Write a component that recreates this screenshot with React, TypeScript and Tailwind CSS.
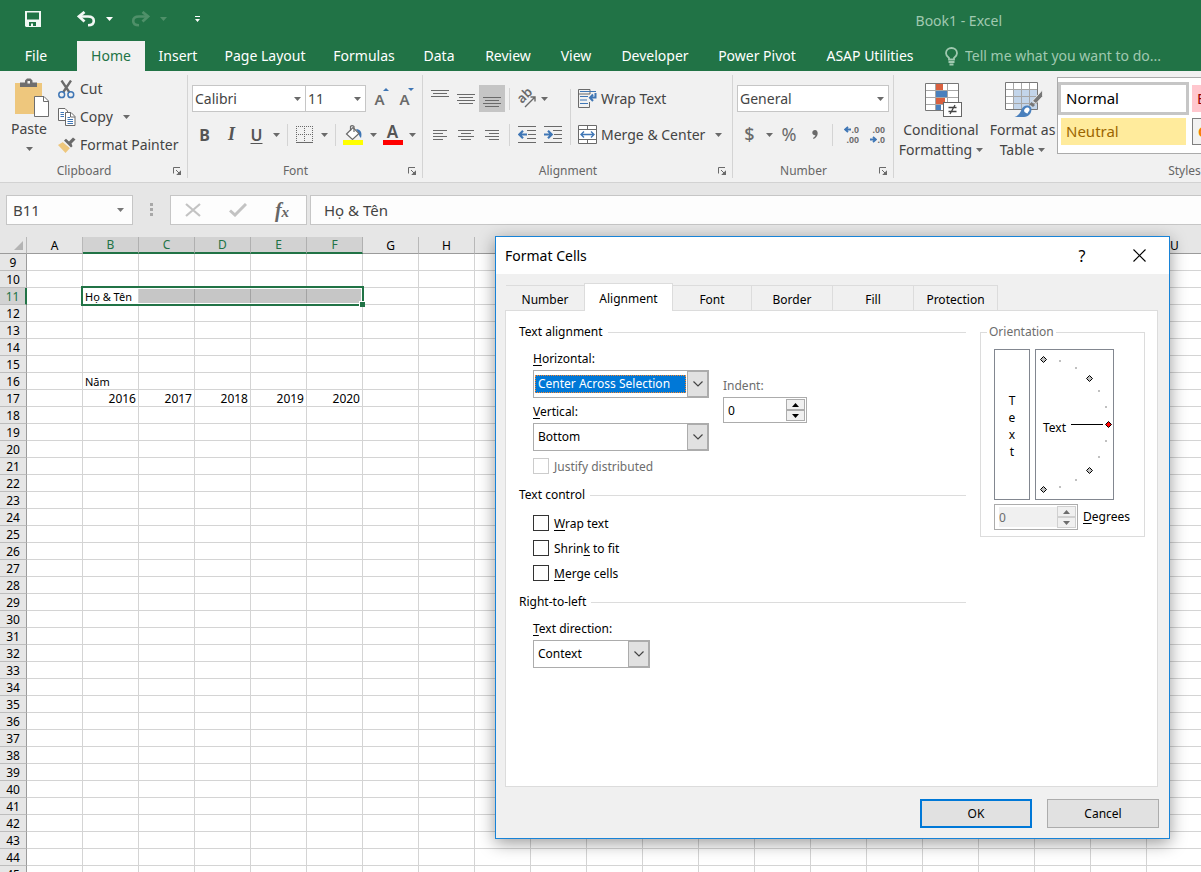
import React from "react";

const GRAY = "#6a6a6a";
const BLUE = "#3f76b5";

function Caret({ className = "" }: { className?: string }) {
  return (
    <svg width="7" height="4" viewBox="0 0 7 4" className={`shrink-0 ${className}`} aria-hidden="true">
      <path d="M0 0H7L3.5 4Z" fill="currentColor" />
    </svg>
  );
}

function Launcher() {
  return (
    <svg width="8" height="8" viewBox="0 0 8 8" fill="none" aria-hidden="true">
      <path d="M.5 6.5V.5H7" stroke={GRAY} />
      <path d="M3 3L6 6" stroke={GRAY} />
      <path d="M8 3.2V8H3.2Z" fill={GRAY} />
    </svg>
  );
}

type Line = [number, number];
function Lines({ rows, w, gap = 4, className = "" }: { rows: Line[]; w: number; gap?: number; className?: string }) {
  return (
    <svg width={w} height={(rows.length - 1) * gap + 1} className={className} aria-hidden="true">
      {rows.map(([a, b], i) => (
        <rect key={i} x={a} y={i * gap} width={b - a} height="1" fill={GRAY} />
      ))}
    </svg>
  );
}

function SaveIcon() {
  return (
    <svg width="16" height="16" viewBox="0 0 16 16" aria-hidden="true">
      <path fillRule="evenodd" fill="#f3f8f5" d="M0 0H16V16H1L0 15ZM2 1.500V8.500H14V1.500ZM4 11V15H6V12.500H8V15H11V11Z" />
    </svg>
  );
}

function UndoIcon({ flip = false }: { flip?: boolean }) {
  return (
    <svg width="19" height="16" viewBox="0 0 19 16" fill="none" stroke={flip ? "#4f9069" : "#f3f8f5"} aria-hidden="true">
      <g transform={flip ? "translate(19 0) scale(-1 1)" : undefined}>
        <path d="M7.500 1L2 5.500L7.500 10.500" strokeWidth="2.800" />
        <path d="M2 5.500H11C15 5.500 16.800 7.500 16.800 10C16.800 13 14.500 14.300 11 14.300" strokeWidth="2.600" />
      </g>
    </svg>
  );
}

function BulbIcon() {
  return (
    <svg width="13" height="19" viewBox="0 0 13 19" fill="none" stroke="#a0c9b0" aria-hidden="true">
      <path d="M4 12.500V11C2 9.500 1 8 1 6.200C1 3.200 3.500 1 6.500 1S12 3.200 12 6.200C12 8 11 9.500 9 11V12.500Z" strokeWidth="1.800" />
      <path d="M3.500 15H9.500M4.500 17.500H8.500" strokeWidth="1.800" />
    </svg>
  );
}

function PasteIcon() {
  return (
    <svg width="35" height="39" viewBox="0 0 35 39" aria-hidden="true">
      <rect x="0" y="5" width="27" height="31" fill="#eec77d" />
      <path d="M5 9V4.500H10V2.500L12 0.500H15.500L17.500 2.500V4.500H22V9Z" fill="#6e6e6e" />
      <rect x="12.500" y="3" width="2.500" height="2.500" fill="#f1f1f1" />
      <path d="M19.500 18.500H29L33.500 23V38.500H19.500Z" fill="#fff" stroke="#6e6e6e" />
      <path d="M28.500 18.500V23.500H33.500" fill="none" stroke="#6e6e6e" />
    </svg>
  );
}

function CutIcon() {
  return (
    <svg width="17" height="19" viewBox="0 0 17 19" fill="none" aria-hidden="true">
      <path d="M3.500 0.500L11.500 12.500M13 0.500L5 12.500" stroke={GRAY} strokeWidth="2.300" />
      <circle cx="3.700" cy="14.700" r="2.900" stroke={BLUE} strokeWidth="1.500" />
      <circle cx="12.800" cy="14.700" r="2.900" stroke={BLUE} strokeWidth="1.500" />
    </svg>
  );
}

function CopyIcon() {
  return (
    <svg width="18" height="18" viewBox="0 0 18 18" fill="#fff" aria-hidden="true">
      <path d="M.5 .5H7L9.500 3V12.500H.5Z" stroke={GRAY} />
      <path d="M2.500 4.500H6M2.500 6.500H6M2.500 8.500H6" stroke={BLUE} />
      <path d="M7.500 4.500H13L17 8.500V17.500H7.500Z" stroke={GRAY} />
      <path d="M12.500 4.500V9H17" stroke={GRAY} fill="none" />
      <path d="M9.500 9.500H12M9.500 11.500H15M9.500 13.500H15M9.500 15.500H15" stroke={BLUE} />
    </svg>
  );
}

function PainterIcon() {
  return (
    <svg width="18" height="16" viewBox="0 0 18 16" aria-hidden="true">
      <path d="M0 8L5 5L12 11L7.500 16Z" fill="#eec77d" />
      <path d="M6 3.500L8 1.800L11 4.500L15 .5L17.500 2.500L13.500 6.500L14.500 9.200L13 10.500Z" fill={GRAY} />
      <path d="M5 4.700L12.500 11.200" stroke="#f1f1f1" strokeWidth="1" />
    </svg>
  );
}

function BordersIcon() {
  return (
    <svg width="17" height="18" viewBox="0 0 17 18" fill="none" stroke={GRAY} aria-hidden="true">
      <path d="M.5 0V16M16.500 0V16M0 .5H17M8.500 0V16M0 8.500H17" strokeDasharray="1 1" />
      <path d="M0 16.500H17" />
    </svg>
  );
}

function BucketIcon() {
  return (
    <svg width="21" height="20" viewBox="0 0 21 20" aria-hidden="true">
      <path d="M13 4C17.500 4.500 19.500 7 18 13C16.500 12 16 10 15.500 8Z" fill={BLUE} />
      <path d="M3.500 9L10 2.500L16 8.500L9.500 14.500Z" fill="#fff" stroke={GRAY} strokeWidth="1.200" />
      <path d="M7.500 6V1.500Q9 -.3 11 1.500V7" fill="none" stroke={GRAY} strokeWidth="1.200" />
      <rect x="0" y="15" width="20" height="5" fill="#ffff00" />
    </svg>
  );
}

function GrowIcon({ down = false }: { down?: boolean }) {
  return (
    <span className="relative block text-[15px] leading-4 font-semibold text-[#6a6a6a]">
      A
      <svg width="6" height="3" viewBox="0 0 6 3" className="absolute top-[-3px] right-[-4px]" aria-hidden="true">
        <path d={down ? "M0 0H6L3 3Z" : "M0 3H6L3 0Z"} fill={BLUE} />
      </svg>
    </span>
  );
}

function OrientIcon() {
  return (
    <svg width="20" height="18" viewBox="0 0 20 18" className="overflow-visible" aria-hidden="true">
      <text x="0" y="0" transform="translate(5 14) rotate(-45)" fontSize="13" fontWeight="600" fontFamily="Noto Sans, sans-serif" fill={GRAY}>ab</text>
      <path d="M8 17L18 7M13.500 7H18V11.500" fill="none" stroke={GRAY} strokeWidth="1.400" />
    </svg>
  );
}

function IndentIcon({ right = false }: { right?: boolean }) {
  return (
    <svg width="19" height="17" viewBox="0 0 19 17" aria-hidden="true">
      <path d="M0 .5H18M9 4.500H18M10 8.500H18M9 12.500H18M0 16.500H18" stroke={GRAY} />
      <g transform={right ? "translate(9 0) scale(-1 1)" : undefined}>
        <path d="M1 8.500H9M5 4.800L1.300 8.500L5 12.200" fill="none" stroke={BLUE} strokeWidth="2.200" />
      </g>
    </svg>
  );
}

function WrapIcon() {
  return (
    <svg width="19" height="19" viewBox="0 0 19 19" fill="none" aria-hidden="true">
      <path d="M.5 .5H12V5M.5 .5V5H12M.5 5V18.500H11.500V13" stroke={GRAY} />
      <path d="M2 2.500H18M2 7.500H10M2 11H9M2 14.500H10" stroke={BLUE} />
      <path d="M17.500 4V8.500H12M15 5.500L12 8.700L15 12" stroke={BLUE} strokeWidth="2" />
    </svg>
  );
}

function MergeIcon() {
  return (
    <svg width="19" height="19" viewBox="0 0 19 19" aria-hidden="true">
      <path d="M.5 .5H18.500V18.500H.5ZM.5 4.500H18.500M.5 14.500H18.500M9.500 .5V4.500M9.500 14.500V18.500" fill="#fff" stroke={GRAY} />
      <path d="M3 9.500H16M6 6.500L3 9.500L6 12.500M13 6.500L16 9.500L13 12.500" fill="none" stroke={BLUE} strokeWidth="1.400" />
    </svg>
  );
}

function SmallArrow({ right = false }: { right?: boolean }) {
  return (
    <svg width="7" height="7" viewBox="0 0 7 7" fill="none" stroke={BLUE} strokeWidth="1.800" aria-hidden="true">
      <path d={right ? "M0 3.500H6M3 .8L6 3.500L3 6.200" : "M7 3.500H1M4 .8L1 3.500L4 6.200"} />
    </svg>
  );
}

function ConditionalIcon() {
  return (
    <svg width="38" height="35" viewBox="0 0 38 35" aria-hidden="true">
      <rect x=".5" y=".5" width="33" height="27" fill="#fff" />
      <rect x="11" y="1" width="7" height="6" fill="#d9603f" />
      <rect x="11" y="8" width="11" height="6" fill="#4a80bd" />
      <rect x="11" y="15" width="9" height="6" fill="#d9603f" />
      <rect x="11" y="22" width="5" height="6" fill="#4a80bd" />
      <path d="M0 7.500H34M0 14.500H34M0 21.500H34M10.500 0V28M22.500 0V28" stroke="#a6a6a6" fill="none" />
      <path d="M.5 .5H33.500V27.500H.5Z" stroke="#777" fill="none" />
      <rect x="18.500" y="19.500" width="18" height="14" fill="#fff" stroke="#666" />
      <path d="M23.500 24.500H31.500M23.500 28.500H31.500M30 22L25 31" stroke="#444" strokeWidth="1.300" />
    </svg>
  );
}

function FormatTableIcon() {
  return (
    <svg width="38" height="35" viewBox="0 0 38 35" aria-hidden="true">
      <rect x=".5" y=".5" width="32" height="27" fill="#fff" />
      <rect x="8" y="8" width="25" height="20" fill="#c3d5ea" />
      <path d="M0 7.500H33M0 14.500H33M0 21.500H33M8.500 0V28M16.500 0V28M24.500 0V28" stroke="#a6a6a6" fill="none" />
      <path d="M.5 .5H32.500V27.500H.5Z" stroke="#777" fill="none" />
      <path d="M37.500 8V14.500L31 21.500L27.500 19Z" fill="#777" stroke="#f1f1f1" strokeWidth=".8" />
      <path d="M26.500 20L30 23L28 25L24.500 22.500Z" fill="#777" />
      <path d="M9.500 35C14 33.500 15 31 16.500 27.500C18.500 23 23.500 22.500 26 25.500C27.500 29 25 34.500 19 35Z" fill="#4a80bd" />
      <path d="M19 29C19.500 25.500 23 24.500 24.500 27C25 29 23 29.500 22.500 31.500C21.500 31 20 31 19 29Z" fill="#fff" />
    </svg>
  );
}

function Sep({ className = "h-[22px]" }: { className?: string }) {
  return <span className={`w-px shrink-0 bg-[#d4d4d4] ${className}`} />;
}

function Tool({ label, className, children }: { label: string; className: string; children: React.ReactNode }) {
  return (
    <button type="button" aria-label={label} className={`flex h-[27px] shrink-0 items-center justify-center ${className}`}>
      {children}
    </button>
  );
}

function Group({ title, launcher = true, className, children }: { title: string; launcher?: boolean; className: string; children: React.ReactNode }) {
  return (
    <section aria-label={title} className={`relative flex shrink-0 flex-col ${className}`}>
      <div className="flex h-[91px]">{children}</div>
      <div className="flex h-[22px] items-center">
        <span className="flex-1 text-center text-xs text-[#666]">{title}</span>
        {launcher && (
          <button type="button" aria-label={`${title} settings`} className="flex w-5 pl-[5px]">
            <Launcher />
          </button>
        )}
      </div>
      {launcher && <span className="absolute top-1 right-0 h-[103px] w-px bg-[#d4d4d4]" />}
    </section>
  );
}

function RibbonSelect({ label, value, className }: { label: string; value: string; className: string }) {
  return (
    <span className={`relative flex h-[27px] items-center border border-[#c6c6c6] bg-white ${className}`}>
      <select aria-label={label} className="h-full w-full appearance-none bg-transparent pl-[2px] text-sm text-[#444] outline-none">
        <option>{value}</option>
      </select>
      <Caret className="pointer-events-none absolute right-1 text-[#6a6a6a]" />
    </span>
  );
}

function TitleBar() {
  return (
    <header className="flex h-[41px] items-center bg-[#217346] pb-1">
      <div className="flex items-center pl-[19px] text-white">
        <Tool label="Save" className="w-7"><SaveIcon /></Tool>
        <Tool label="Undo" className="ml-[25px] w-7"><UndoIcon /></Tool>
        <Tool label="Undo list" className="w-[18px]"><Caret /></Tool>
        <Tool label="Redo" className="ml-2 w-7"><UndoIcon flip /></Tool>
        <Tool label="Redo list" className="w-[18px] text-[#4f9069]"><Caret /></Tool>
        <Tool label="Customize Quick Access Toolbar" className="ml-[17px] w-4">
          <svg width="7" height="6" viewBox="0 0 7 6" aria-hidden="true">
            <path d="M1 0H6V1H1ZM1 3H6L3.500 6Z" fill="#fff" />
          </svg>
        </Tool>
      </div>
      <h1 className="mr-[199px] ml-auto pt-1 text-sm text-[#a0c9b0]">Book1 - Excel</h1>
    </header>
  );
}

const TABS: [string, string][] = [
  ["Home", "w-[68px]"],
  ["Insert", "w-[66px]"],
  ["Page Layout", "w-[108px]"],
  ["Formulas", "w-[90px]"],
  ["Data", "w-[60px]"],
  ["Review", "w-[78px]"],
  ["View", "w-[58px]"],
  ["Developer", "w-[100px]"],
  ["Power Pivot", "w-[104px]"],
  ["ASAP Utilities", "w-[122px]"],
];

function TabBar() {
  return (
    <nav className="flex h-[30px] items-stretch bg-[#217346] text-sm whitespace-nowrap text-white">
      <button type="button" className="w-[72px] shrink-0">File</button>
      <div role="tablist" className="ml-[5px] flex">
        {TABS.map(([name, w], i) => (
          <button
            key={name}
            type="button"
            role="tab"
            aria-selected={i === 0}
            className={`shrink-0 ${w} ${i === 0 ? "bg-[#f1f1f1] text-[#217346]" : ""}`}
          >
            {name}
          </button>
        ))}
      </div>
      <label className="ml-[14px] flex items-center gap-[7px]">
        <BulbIcon />
        <input
          aria-label="Tell me what you want to do"
          placeholder="Tell me what you want to do..."
          className="w-[210px] bg-transparent text-sm outline-none placeholder:text-[#a0c9b0]"
        />
      </label>
    </nav>
  );
}

function Ribbon() {
  return (
    <div className="flex h-[112px] overflow-hidden border-b border-[#d2d2d2] bg-[#f1f1f1] text-sm whitespace-nowrap text-[#444]">
      <Group title="Clipboard" className="w-[188px]">
        <button type="button" className="flex w-[58px] flex-col items-center pt-[7px]">
          <span className="pl-[6px]"><PasteIcon /></span>
          <span className="mt-[2px] leading-5">Paste</span>
          <Caret className="mt-2 text-[#6a6a6a]" />
        </button>
        <div className="flex flex-col pt-1">
          <button type="button" className="flex h-7 items-center"><span className="w-[22px]"><CutIcon /></span>Cut</button>
          <button type="button" className="flex h-7 items-center"><span className="w-[22px]"><CopyIcon /></span>Copy<Caret className="ml-[10px] text-[#6a6a6a]" /></button>
          <button type="button" className="flex h-7 items-center"><span className="w-[22px]"><PainterIcon /></span>Format Painter</button>
        </div>
      </Group>

      <Group title="Font" className="w-[235px]">
        <div className="flex flex-col gap-[9px] pt-[14px] pl-1 text-[#6a6a6a]">
          <div className="flex items-center">
            <RibbonSelect label="Font" value="Calibri" className="w-[114px]" />
            <RibbonSelect label="Font size" value="11" className="w-[60px] border-l-0" />
            <Tool label="Increase font size" className="ml-px w-[25px]"><GrowIcon /></Tool>
            <Tool label="Decrease font size" className="w-[25px]"><GrowIcon down /></Tool>
          </div>
          <div className="flex items-center">
            <Tool label="Bold" className="w-[25px] text-base font-bold text-[#555]">B</Tool>
            <Tool label="Italic" className="ml-[2px] w-[25px] font-['Liberation_Serif',serif] text-[18px] font-bold text-[#555] italic">I</Tool>
            <Tool label="Underline" className="w-[25px] text-base font-semibold text-[#555] underline underline-offset-2">U</Tool>
            <Tool label="Underline styles" className="w-[14px]"><Caret /></Tool>
            <Sep className="ml-1 h-[22px]" />
            <Tool label="Borders" className="ml-1 w-[25px]"><BordersIcon /></Tool>
            <Tool label="Border styles" className="w-[14px]"><Caret /></Tool>
            <Sep className="ml-1 h-[22px]" />
            <Tool label="Fill color" className="ml-[5px] w-[25px]"><BucketIcon /></Tool>
            <Tool label="Fill colors" className="w-[14px]"><Caret /></Tool>
            <Tool label="Font color" className="w-[25px] flex-col">
              <span className="text-[17px] leading-[16px] font-semibold text-[#555]">A</span>
              <span className="h-[5px] w-5 bg-[#ff0000]" />
            </Tool>
            <Tool label="Font colors" className="w-[14px]"><Caret /></Tool>
          </div>
        </div>
      </Group>

      <Group title="Alignment" className="w-[310px]">
        <div className="flex flex-col gap-[9px] pt-[14px] pl-1 text-[#6a6a6a]">
          <div className="flex items-center">
            <Tool label="Top align" className="w-[26px] pb-[10px]"><Lines w={18} rows={[[0, 18], [2, 16], [0, 18]]} gap={3} /></Tool>
            <Tool label="Middle align" className="w-[26px]"><Lines w={18} rows={[[0, 18], [2, 16], [0, 18], [2, 16]]} gap={3} /></Tool>
            <Tool label="Bottom align" className="w-[26px] bg-[#c5c5c5] pt-[7px]"><Lines w={18} rows={[[0, 18], [2, 16], [0, 18], [2, 16]]} gap={3} /></Tool>
            <Sep className="ml-1 h-[22px]" />
            <Tool label="Orientation" className="ml-[7px] w-[20px]"><OrientIcon /></Tool>
            <Tool label="Orientation options" className="w-[14px]"><Caret /></Tool>
          </div>
          <div className="flex items-center">
            <Tool label="Align left" className="w-[26px]"><Lines w={16} gap={3} rows={[[1, 15], [1, 11], [1, 15], [1, 11]]} /></Tool>
            <Tool label="Center" className="w-[26px]"><Lines w={16} gap={3} rows={[[0, 16], [3, 13], [0, 16], [3, 13]]} /></Tool>
            <Tool label="Align right" className="w-[26px]"><Lines w={16} gap={3} rows={[[1, 15], [5, 15], [1, 15], [5, 15]]} /></Tool>
            <Sep className="ml-1 h-[22px]" />
            <Tool label="Decrease indent" className="ml-1 w-[26px]"><IndentIcon /></Tool>
            <Tool label="Increase indent" className="w-[26px]"><IndentIcon right /></Tool>
          </div>
        </div>
        <Sep className="mt-[18px] ml-1 h-[56px]" />
        <div className="flex flex-col gap-[9px] pt-[14px] pl-[7px]">
          <button type="button" className="flex h-[27px] items-center gap-1"><WrapIcon />Wrap Text</button>
          <button type="button" className="flex h-[27px] items-center gap-1"><MergeIcon />Merge &amp; Center<Caret className="ml-[6px] text-[#6a6a6a]" /></button>
        </div>
      </Group>

      <Group title="Number" className="w-[161px]">
        <div className="flex flex-col gap-[9px] pt-[14px] pl-1 text-[#6a6a6a]">
          <RibbonSelect label="Number format" value="General" className="w-[152px]" />
          <div className="flex items-center">
            <Tool label="Accounting format" className="w-[25px] text-[18px] font-medium">$</Tool>
            <Tool label="Currencies" className="w-[14px]"><Caret /></Tool>
            <Tool label="Percent" className="w-[26px] text-[18px]">%</Tool>
            <Tool label="Comma style" className="w-[25px]">
              <svg width="6" height="9" viewBox="0 0 6 10" aria-hidden="true">
                <path d="M3 0C5 0 6 1.500 6 3.500C6 6.500 4 9 1 10V8.500C2.500 7.800 3.300 6.800 3.400 5.800C1.500 6 0 4.800 0 3C0 1.200 1.300 0 3 0Z" fill="#6a6a6a" />
              </svg>
            </Tool>
            <Sep className="ml-[5px] h-[22px]" />
            <Tool label="Increase decimal" className="ml-1 w-[26px] flex-col items-end pr-1 font-['Liberation_Sans',sans-serif] text-[9px] leading-[10px] font-bold">
              <span className="flex items-center"><SmallArrow />.0</span>
              <span>.00</span>
            </Tool>
            <Tool label="Decrease decimal" className="w-[26px] flex-col items-end pr-1 font-['Liberation_Sans',sans-serif] text-[9px] leading-[10px] font-bold">
              <span>.00</span>
              <span className="flex items-center"><SmallArrow right />.0</span>
            </Tool>
          </div>
        </div>
      </Group>

      <Group title="Styles" launcher={false} className="w-[581px]">
        <button type="button" className="flex w-[94px] flex-col items-center pt-3 leading-5">
          <span className="pl-[5px]"><ConditionalIcon /></span>
          <span className="mt-[2px]">Conditional</span>
          <span className="flex items-center gap-1">Formatting<Caret className="text-[#6a6a6a]" /></span>
        </button>
        <button type="button" className="flex w-[69px] flex-col items-center pt-[11px] leading-5">
          <span className="pl-[2px]"><FormatTableIcon /></span>
          <span className="mt-[3px]">Format as</span>
          <span className="flex items-center gap-1">Table<Caret className="text-[#6a6a6a]" /></span>
        </button>
        <div className="mt-[6px] grid h-[77px] flex-1 auto-rows-[27px] grid-cols-[125px_125px] gap-[6px] border border-[#ababab] bg-white pt-[7px] pl-[3px] text-[15px] *:pl-[5px] *:text-left">
          <button type="button" className="text-black outline-3 outline-[#c6c6c6]">Normal</button>
          <button type="button" className="bg-[#ffc7ce] text-[#9c0006]">Bad</button>
          <button type="button" className="bg-[#ffeb9c] text-[#9c6500]">Neutral</button>
          <button type="button" className="border border-[#7f7f7f] bg-[#f2f2f2] font-bold text-[#fa7d00]">Calculation</button>
        </div>
      </Group>
    </div>
  );
}

function FormulaBar() {
  return (
    <div className="flex h-[54px] items-start bg-[#e6e6e6] pt-3 text-[15px] text-[#444]">
      <div className="ml-[6px] flex h-[30px] w-[127px] shrink-0 items-center border border-[#c6c6c6] bg-[#fdfdfd] pr-2">
        <input aria-label="Name box" defaultValue="B11" className="w-0 flex-1 bg-transparent pl-[6px] outline-none" />
        <button type="button" aria-label="Named ranges"><Caret className="text-[#777]" /></button>
      </div>
      <svg width="3" height="14" viewBox="0 0 3 14" className="mt-2 ml-[17px] shrink-0" fill="#a8a8a8" aria-hidden="true">
        <path d="M0 0H3V3H0ZM0 5H3V8H0ZM0 10H3V13H0Z" />
      </svg>
      <div className="ml-[17px] flex h-[30px] w-[137px] shrink-0 items-center border border-[#c6c6c6] bg-[#fdfdfd]">
        <Tool label="Cancel entry" className="w-[43px]">
          <svg width="16" height="14" viewBox="0 0 16 14" fill="none" stroke="#c3c3c3" strokeWidth="2.200" aria-hidden="true"><path d="M1 1L15 13M15 1L1 13" /></svg>
        </Tool>
        <Tool label="Enter" className="w-[48px]">
          <svg width="18" height="14" viewBox="0 0 18 14" fill="none" stroke="#c3c3c3" strokeWidth="3" aria-hidden="true"><path d="M1 7.500L6 12L17 1" /></svg>
        </Tool>
        <Tool label="Insert function" className="w-[40px] font-['Liberation_Serif',serif] font-bold text-[#666] italic">
          <span className="text-[20px] leading-5">f</span><span className="pt-1 text-[15px] leading-5">x</span>
        </Tool>
      </div>
      <input aria-label="Formula bar" defaultValue="Họ & Tên" className="ml-[3px] h-[30px] min-w-0 flex-1 border border-r-0 border-[#c6c6c6] bg-[#fdfdfd] pl-[13px] outline-none" />
    </div>
  );
}

const COLUMNS = "ABCDEFGHIJKLMNOPQRSTU".split("");
const ROWS = Array.from({ length: 37 }, (_, i) => i + 9);
const SELECTED = ["B", "C", "D", "E", "F"];
const CELLS: Record<string, string> = {
  B11: "Họ & Tên",
  B16: "Năm",
  B17: "2016",
  C17: "2017",
  D17: "2018",
  E17: "2019",
  F17: "2020",
};

function cellClass(col: string, row: number) {
  if (row === 11 && SELECTED.includes(col) && col !== "B") return "border-[#a3a3a3] bg-[#c6c6c6]";
  return "border-[#d4d4d4]";
}

function Sheet() {
  return (
    <main className="relative min-h-0 flex-1 overflow-hidden bg-white">
      <table className="w-[1203px] table-fixed border-separate border-spacing-0 text-xs leading-[15px] text-black">
        <colgroup>
          <col className="w-[27px]" />
          {COLUMNS.map((c) => <col key={c} className="w-14" />)}
        </colgroup>
        <thead>
          <tr>
            <th aria-label="Select all" className="h-[17px] border-r border-b border-[#9b9b9b] border-r-[#b8b8b8] bg-[#e6e6e6] p-0">
              <svg width="9" height="9" viewBox="0 0 9 9" className="ml-[14px]" aria-hidden="true"><path d="M9 0V9H0Z" fill="#b4b4b4" /></svg>
            </th>
            {COLUMNS.map((c) => (
              <th
                key={c}
                scope="col"
                className={`h-[17px] border-r p-0 font-normal ${
                  SELECTED.includes(c)
                    ? "border-b-2 border-r-[#b0b0b0] border-b-[#217346] bg-[#d2d2d2] text-[#217346]"
                    : "border-b border-r-[#b8b8b8] border-b-[#9b9b9b] bg-[#e6e6e6]"
                }`}
              >
                {c}
              </th>
            ))}
          </tr>
        </thead>
        <tbody>
          {ROWS.map((r) => (
            <tr key={r}>
              <th
                scope="row"
                className={`h-[17px] border-b border-b-[#bdbdbd] p-0 pt-px font-normal ${
                  r === 11 ? "border-r-2 border-r-[#217346] bg-[#d2d2d2] text-[#217346]" : "border-r border-r-[#9b9b9b] bg-[#e6e6e6]"
                }`}
              >
                {r}
              </th>
              {COLUMNS.map((c) => (
                <td
                  key={c}
                  className={`h-[17px] border-r border-b p-0 px-[2px] pt-px whitespace-nowrap ${r === 17 ? "text-right" : "text-[11px]"} ${cellClass(c, r)}`}
                >
                  {CELLS[`${c}${r}`]}
                </td>
              ))}
            </tr>
          ))}
        </tbody>
      </table>
      <div className="pointer-events-none absolute top-[49px] left-[81px] h-5 w-[283px] border-2 border-[#217346]">
        <div className="h-full border border-white" />
        <span className="absolute right-[-3px] bottom-[-3px] h-[6px] w-[6px] border-t border-l border-white bg-[#217346]" />
      </div>
    </main>
  );
}

function DialogSelect({ id, value, highlight = false, className }: { id: string; value: string; highlight?: boolean; className: string }) {
  return (
    <span className={`flex h-7 items-center border border-[#acacac] bg-white ${className}`}>
      <select
        id={id}
        className={`mx-px h-[18px] min-w-0 flex-1 appearance-none outline-none ${
          highlight ? "border border-dotted border-[#ff8728] bg-[#0078d7] pl-[2px] text-white" : "bg-white pl-[3px] text-black"
        }`}
      >
        <option>{value}</option>
      </select>
      <span className="pointer-events-none flex h-full w-[21px] items-center justify-center border border-[#acacac] bg-[#e1e1e1]">
        <svg width="10" height="6" viewBox="0 0 10 6" fill="none" stroke="#444" strokeWidth="1.200" aria-hidden="true"><path d="M.5 .5L5 5L9.500 .5" /></svg>
      </span>
    </span>
  );
}

function Spinner({ id, disabled = false }: { id: string; disabled?: boolean }) {
  const btn = `flex h-[11px] w-[19px] items-center justify-center border ${disabled ? "border-[#d0d0d0] bg-[#f0f0f0]" : "border-[#acacac] bg-[#f0f0f0]"}`;
  const color = disabled ? "#6d6d6d" : "#000";
  return (
    <span className="flex h-[26px] w-[84px] items-center border border-[#acacac] bg-white pr-px">
      <input
        id={id}
        defaultValue="0"
        disabled={disabled}
        className={`h-5 w-0 flex-1 outline-none ${disabled ? "ml-1 bg-[#f0f0f0] text-[#6d6d6d]" : "bg-white pl-1 text-black"}`}
      />
      <span className="flex flex-col">
        <button type="button" disabled={disabled} aria-label="Increase" className={btn}>
          <svg width="7" height="4" viewBox="0 0 7 4" aria-hidden="true"><path d="M0 4H7L3.500 0Z" fill={color} /></svg>
        </button>
        <button type="button" disabled={disabled} aria-label="Decrease" className={btn}>
          <svg width="7" height="4" viewBox="0 0 7 4" aria-hidden="true"><path d="M0 0H7L3.500 4Z" fill={color} /></svg>
        </button>
      </span>
    </span>
  );
}

function Heading({ children }: { children: React.ReactNode }) {
  return (
    <h3 className="flex h-4 items-center gap-[5px] leading-[18px]">
      {children}
      <span className="h-px flex-1 bg-[#dcdcdc]" />
    </h3>
  );
}

function Check({ disabled = false, children }: { disabled?: boolean; children: React.ReactNode }) {
  return (
    <label className={`flex h-[25px] items-center gap-[5px] ${disabled ? "text-[#6d6d6d]" : ""}`}>
      <input type="checkbox" disabled={disabled} className={`size-4 appearance-none border bg-white ${disabled ? "border-[#cccccc]" : "border-[#333]"}`} />
      <span className="pt-[2px]">{children}</span>
    </label>
  );
}

const K = ({ children }: { children: React.ReactNode }) => <span className="underline underline-offset-2">{children}</span>;

const DIAMONDS: [number, number, string][] = [
  [8.5, 10.5, "#c0c0c0"],
  [54.5, 29.5, "#c0c0c0"],
  [73.5, 75.5, "#ff0000"],
  [54.5, 121.5, "#c0c0c0"],
  [8.5, 140.5, "#c0c0c0"],
];
const DOTS: [number, number][] = [[24, 11], [40, 18], [63, 41], [70, 57], [70, 91], [63, 107], [40, 130], [24, 137]];

function Dial() {
  return (
    <svg width="79" height="151" viewBox="0 0 79 151" role="img" aria-label="Rotation dial">
      <rect x=".5" y=".5" width="78" height="150" fill="#fff" stroke="#828790" />
      {DOTS.map(([x, y]) => <rect key={`${x}-${y}`} x={x} y={y} width="2" height="2" fill="#c0c0c0" />)}
      <path d="M36 75.500H68" stroke="#000" />
      {DIAMONDS.map(([x, y, fill]) => (
        <path key={`${x}-${y}`} d={`M${x - 3} ${y}L${x} ${y - 3}L${x + 3} ${y}L${x} ${y + 3}Z`} fill={fill} stroke="#000" />
      ))}
      <text x="8" y="83" fontSize="12" fontFamily="Noto Sans, sans-serif" fill="#000">Text</text>
    </svg>
  );
}

const DIALOG_TABS: [string, string][] = [
  ["Number", "w-[78px] border-l-0"],
  ["Alignment", "w-[89px]"],
  ["Font", "w-[79px] border-l-0"],
  ["Border", "w-[81px] border-l-0"],
  ["Fill", "w-[81px] border-l-0"],
  ["Protection", "w-[84px] border-l-0"],
];

function FormatCells() {
  return (
    <div
      role="dialog"
      aria-labelledby="dialog-title"
      className="absolute top-[236px] left-[495px] flex w-[675px] flex-col border border-[#1883d7] bg-[#f0f0f0] text-xs whitespace-nowrap text-black shadow-[0_4px_16px_rgba(0,0,0,0.4)]"
    >
      <div className="flex h-[37px] items-center bg-white pl-[9px]">
        <h2 id="dialog-title" className="flex-1 text-sm">Format Cells</h2>
        <button type="button" aria-label="Help" className="w-[46px] text-base">?</button>
        <button type="button" aria-label="Close" className="ml-1 flex w-[60px] justify-center">
          <svg width="13" height="13" viewBox="0 0 13 13" stroke="#000" strokeWidth="1.100" aria-hidden="true"><path d="M.5 .5L12.500 12.500M12.500 .5L.5 12.500" /></svg>
        </button>
      </div>

      <div role="tablist" className="mt-[9px] flex items-end pl-[10px]">
        {DIALOG_TABS.map(([name, w]) =>
          name === "Alignment" ? (
            <button key={name} type="button" role="tab" aria-selected="true" className={`relative -mb-px h-7 border border-b-0 border-[#dcdcdc] bg-white pt-[2px] ${w}`}>{name}</button>
          ) : (
            <button key={name} type="button" role="tab" aria-selected="false" className={`h-[25px] border border-b-0 border-[#dcdcdc] pt-[3px] ${name === "Number" ? "border-r-0" : ""} ${w}`}>{name}</button>
          )
        )}
      </div>

      <div role="tabpanel" className="mr-[11px] ml-[9px] flex h-[477px] items-start justify-between border border-[#dcdcdc] bg-white pt-[13px] pr-3 pl-[13px]">
        <div className="w-[447px]">
          <Heading>Text alignment</Heading>
          <div className="flex gap-[14px] pt-[10px] pl-[14px]">
            <div className="flex flex-col">
              <label htmlFor="horizontal" className="h-4 leading-[18px]"><K>H</K>orizontal:</label>
              <DialogSelect id="horizontal" value="Center Across Selection" highlight className="mt-1 w-44" />
              <label htmlFor="vertical" className="mt-[5px] h-4 leading-[18px]"><K>V</K>ertical:</label>
              <DialogSelect id="vertical" value="Bottom" className="mt-1 w-44" />
              <div className="mt-[2px]"><Check disabled>Justify distributed</Check></div>
            </div>
            <div className="flex flex-col pt-[27px]">
              <label htmlFor="indent" className="h-4 leading-[18px] text-[#6d6d6d]">Indent:</label>
              <span className="mt-1"><Spinner id="indent" /></span>
            </div>
          </div>
          <div className="mt-[9px]"><Heading>Text control</Heading></div>
          <div className="flex flex-col pt-[7px] pl-[14px]">
            <Check><K>W</K>rap text</Check>
            <Check>Shrin<K>k</K> to fit</Check>
            <Check><K>M</K>erge cells</Check>
          </div>
          <div className="mt-[9px]"><Heading>Right-to-left</Heading></div>
          <div className="flex flex-col pt-[10px] pl-[14px]">
            <label htmlFor="direction" className="h-4 leading-[18px]"><K>T</K>ext direction:</label>
            <DialogSelect id="direction" value="Context" className="mt-1 w-[117px]" />
          </div>
        </div>

        <fieldset className="w-[165px] border border-[#dcdcdc] pr-3 pb-[6px] pl-[13px]">
          <legend className="-ml-[7px] px-[2px] leading-4 text-[#6d6d6d]">Orientation</legend>
          <div className="mt-[9px] flex gap-[5px]">
            <button type="button" className="flex w-9 flex-col items-center justify-center border border-[#828790] pt-[2px] leading-[17px]">
              <span>T</span><span>e</span><span>x</span><span>t</span>
            </button>
            <Dial />
          </div>
          <div className="mt-1 flex items-center gap-[5px]">
            <Spinner id="degrees" disabled />
            <label htmlFor="degrees"><K>D</K>egrees</label>
          </div>
        </fieldset>
      </div>

      <div className="flex justify-end gap-[15px] pt-3 pr-[10px] pb-[10px]">
        <button type="button" className="h-[29px] w-28 border-2 border-[#0078d7] bg-[#e1e1e1]">OK</button>
        <button type="button" className="h-[29px] w-28 border border-[#acacac] bg-[#e1e1e1]">Cancel</button>
      </div>
    </div>
  );
}

export default function App() {
  return (
    <div className="relative flex h-screen flex-col overflow-hidden bg-[#e6e6e6] font-['Noto_Sans',sans-serif]">
      <TitleBar />
      <TabBar />
      <Ribbon />
      <FormulaBar />
      <Sheet />
      <FormatCells />
    </div>
  );
}
